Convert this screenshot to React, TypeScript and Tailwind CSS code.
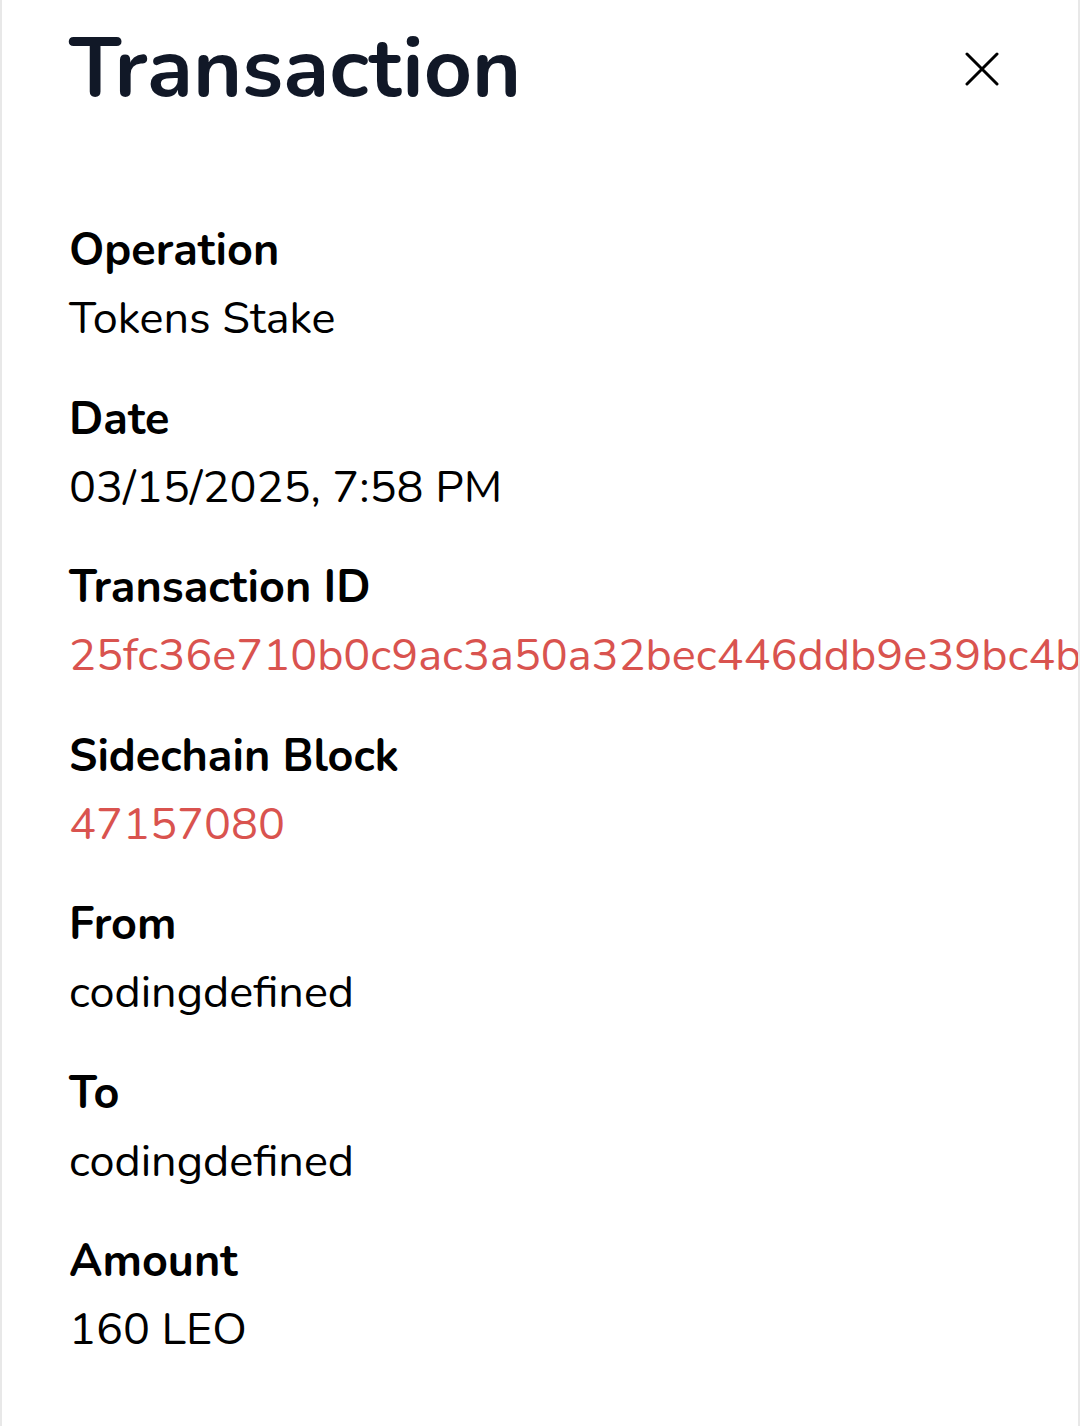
const rows = [
  { label: "Operation", value: "Tokens Stake" },
  { label: "Date", value: "03/15/2025, 7:58 PM" },
  { label: "Transaction ID", value: "25fc36e710b0c9ac3a50a32bec446ddb9e39bc4b", link: true },
  { label: "Sidechain Block", value: "47157080", link: true },
  { label: "From", value: "codingdefined" },
  { label: "To", value: "codingdefined" },
  { label: "Amount", value: "160 LEO" },
];

const CloseIcon = () => (
  <svg width="34" height="34" viewBox="0 0 34 34" fill="none" className="text-black">
    <path d="M2 2L32 32M32 2L2 32" stroke="currentColor" strokeWidth="3" strokeLinecap="round" />
  </svg>
);

const App = () => {
  return (
    <div
      className="min-h-[1426px] w-[1080px] bg-[#e8e8e8] px-[2px]"
      style={{ fontFamily: "Nunito, Lato, 'Noto Sans', sans-serif" }}
    >
      <div className="min-h-[1426px] overflow-hidden bg-white pl-[67px] pr-[79px]">
        {/* Header */}
        <div className="flex items-center justify-between pt-[21px]">
          <h1 className="text-[84px] font-bold leading-[96px] text-[#111827]">Transaction</h1>
          <CloseIcon />
        </div>

        {/* Details */}
        <div className="mt-[100px] flex flex-col gap-[32.5px]">
          {rows.map((r) => (
            <div key={r.label} className="flex flex-col">
              <div className="text-[45px] font-bold leading-[68px] text-black">{r.label}</div>
              <div
                className={`whitespace-nowrap text-[45px] leading-[68px] ${
                  r.link ? "text-[#d9534f]" : "text-black"
                }`}
              >
                {r.value}
              </div>
            </div>
          ))}
        </div>
      </div>
    </div>
  );
};

export default App;
